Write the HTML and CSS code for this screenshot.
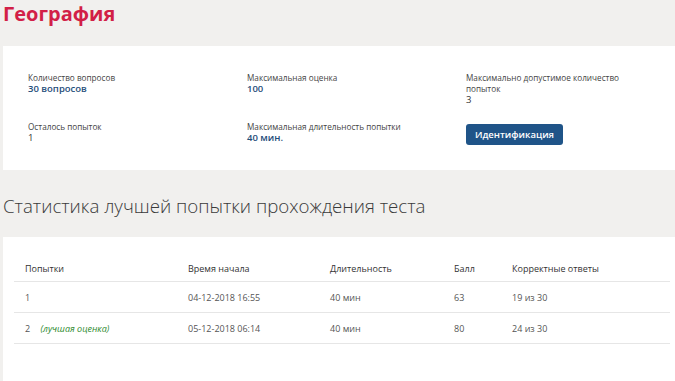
FILE: index.html
```html
<!DOCTYPE html>
<html lang="ru">
<head>
  <meta charset="UTF-8" />
  <meta name="viewport" content="width=device-width, initial-scale=1.0"/>
  <title>География</title>
  <link rel="stylesheet" href="styles.css">
</head>
<body>
  <div class="page">
    <h1 class="title">География</h1>

    <div class="card info">
      <div class="info-grid">
        <div class="item">
          <div class="label">Количество вопросов</div>
          <div class="value">30 вопросов</div>
        </div>
        <div class="item">
          <div class="label">Максимальная оценка</div>
          <div class="value">100</div>
        </div>
        <div class="item">
          <div class="label">Максимально допустимое количество попыток</div>
          <div class="value plain">3</div>
        </div>
        <div class="item">
          <div class="label">Осталось попыток</div>
          <div class="value plain">1</div>
        </div>
        <div class="item">
          <div class="label">Максимальная длительность попытки</div>
          <div class="value">40 мин.</div>
        </div>
        <div class="item">
          <button class="btn">Идентификация</button>
        </div>
      </div>
    </div>

    <h2 class="subtitle">Статистика лучшей попытки прохождения теста</h2>

    <div class="card stats">
      <table>
        <tr>
          <th class="c1">Попытки</th>
          <th class="c2">Время начала</th>
          <th class="c3">Длительность</th>
          <th class="c4">Балл</th>
          <th>Корректные ответы</th>
        </tr>
        <tr>
          <td>1</td>
          <td>04-12-2018 16:55</td>
          <td>40 мин</td>
          <td>63</td>
          <td>19 из 30</td>
        </tr>
        <tr>
          <td>2 <span class="best">(лучшая оценка)</span></td>
          <td>05-12-2018 06:14</td>
          <td>40 мин</td>
          <td>80</td>
          <td>24 из 30</td>
        </tr>
      </table>
    </div>
  </div>
</body>
</html>
```

FILE: styles.css
```css
body {
  margin: 0;
  background-color: #f1f0ee;
  font-family: "Open Sans", "Noto Sans", sans-serif;
  color: #333;
  overflow: hidden;
}

.page {
  width: 690px;
  padding-left: 3px;
}

.title {
  margin: 0;
  height: 46px;
  font-size: 20px;
  font-weight: 700;
  line-height: 28px;
  color: #d21f47;
}

.card {
  background-color: #fff;
}

.info {
  height: 124px;
  box-sizing: border-box;
  padding: 26px 0 0 25px;
}

.info-grid {
  display: grid;
  grid-template-columns: repeat(3, 180px);
  column-gap: 39px;
  row-gap: 15px;
}

.label {
  font-size: 8.2px;
  line-height: 11px;
  color: #444;
}

.value {
  font-size: 9.5px;
  line-height: 12px;
  font-weight: 600;
  color: #1f4e7a;
}

.value.plain {
  font-weight: 400;
  color: #333;
}

.btn {
  margin-top: 1px;
  width: 97px;
  height: 21px;
  border: none;
  border-radius: 3px;
  background-color: #1f5488;
  color: #fff;
  font-family: "Open Sans", "Noto Sans", sans-serif;
  font-size: 9.5px;
  font-weight: 600;
  padding: 0;
}

.subtitle {
  margin: 0;
  height: 67px;
  box-sizing: border-box;
  padding-top: 23px;
  font-size: 18.7px;
  font-weight: 300;
  line-height: 26px;
  color: #3a3a3a;
}

.stats {
  height: 150px;
  padding: 19px 0 0 11px;
  box-sizing: border-box;
}

table {
  width: 656px;
  border-collapse: collapse;
  font-size: 9px;
}

th, td {
  text-align: left;
  padding: 0 0 0 11px;
  height: 30px;
  border-bottom: 1px solid #e6e6e6;
}

th {
  height: 25px;
  font-weight: 400;
  color: #333;
}

td {
  color: #555;
}

.c1 { width: 152px; }
.c2 { width: 131px; }
.c3 { width: 113px; }
.c4 { width: 47px; }

.best {
  margin-left: 8px;
  font-style: italic;
  color: #2e8a2e;
}
```
